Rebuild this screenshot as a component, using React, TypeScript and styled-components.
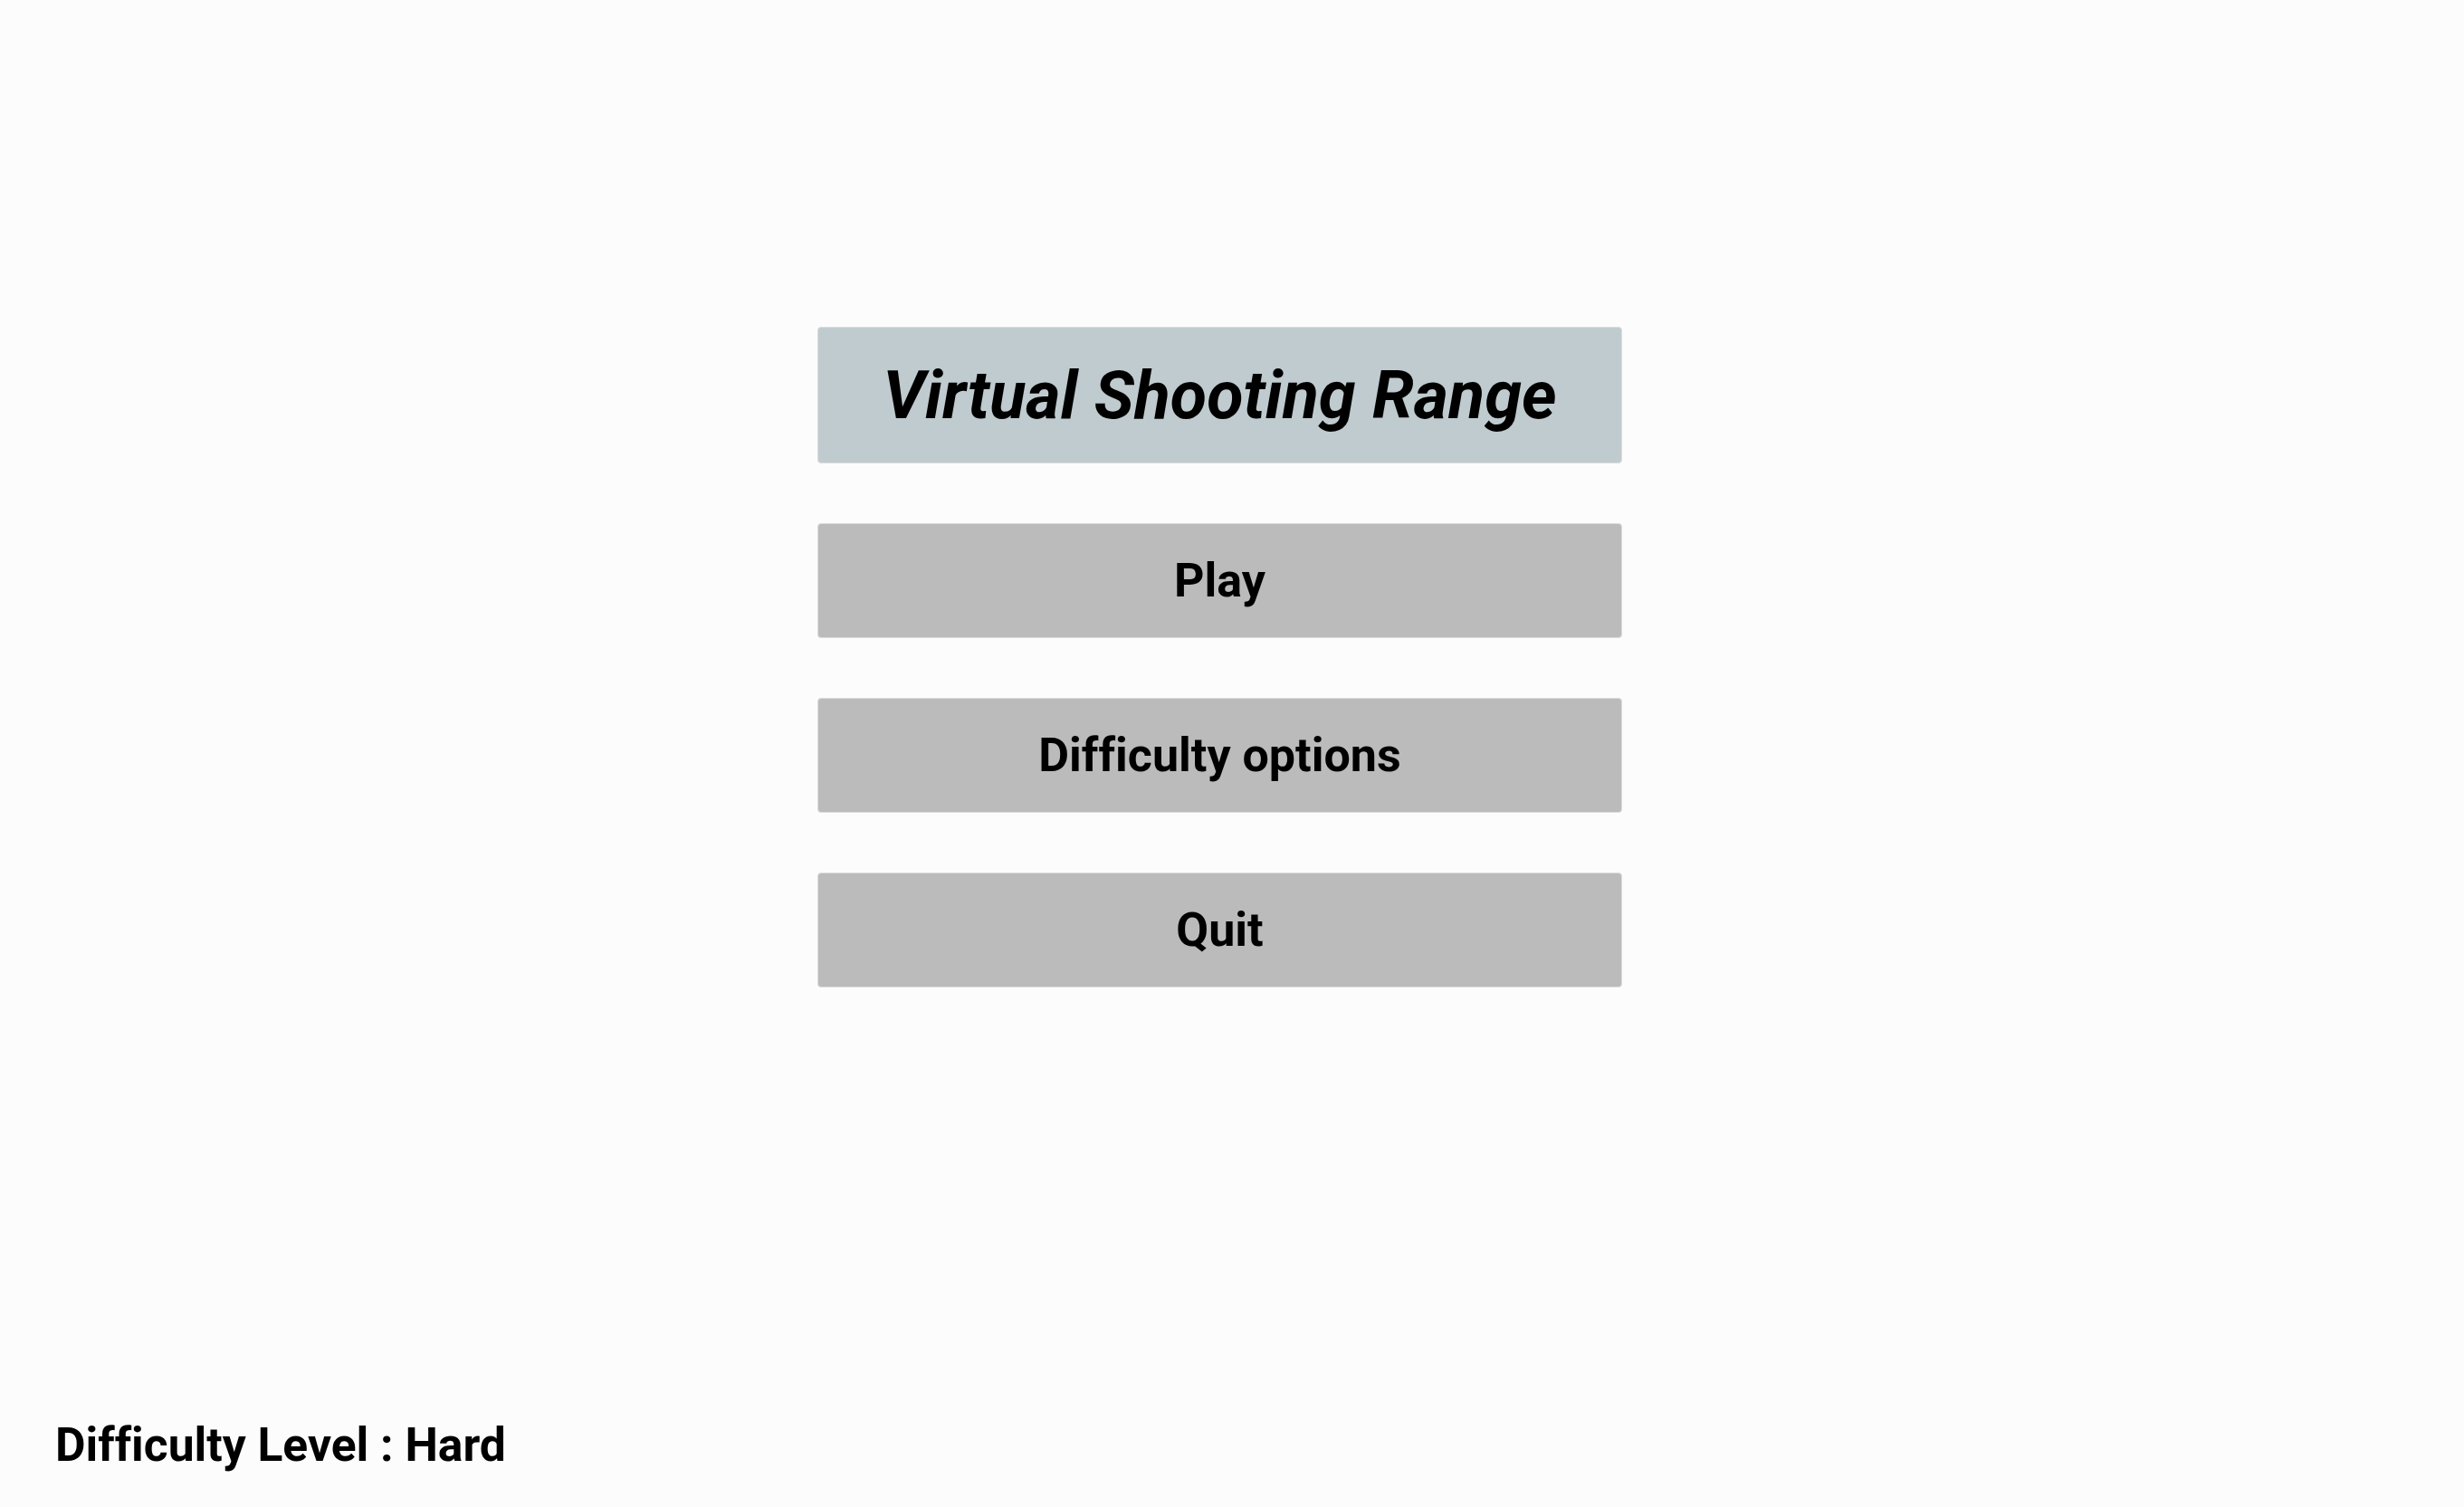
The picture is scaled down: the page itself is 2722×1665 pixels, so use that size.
import React from "react";
import styled, { createGlobalStyle } from "styled-components";

const Global = createGlobalStyle`
  html, body { margin: 0; padding: 0; background: #fcfcfc; }
  body {
    font-family: Roboto, "Liberation Sans", sans-serif;
    color: #000;
    font-variant-ligatures: none;
    font-feature-settings: "liga" 0;
  }
`;

const Page = styled.div`
  width: 100vw;
  height: 100vh;
  display: flex;
  flex-direction: column;
  box-sizing: border-box;
  padding-top: 361px;
  background: #fcfcfc;
`;

const Menu = styled.div`
  display: flex;
  flex-direction: column;
  gap: 66px;
  width: 889px;
  margin-left: 903px;
`;

const Panel = styled.div<{ $title?: boolean }>`
  box-sizing: border-box;
  height: ${(p) => (p.$title ? 151 : 127)}px;
  display: flex;
  align-items: center;
  justify-content: center;
  background: ${(p) => (p.$title ? "#bfcbcf" : "#bbbbbb")};
  border: 1px solid #dcdcdc;
  border-radius: 4px;
  font-weight: 700;
  font-style: ${(p) => (p.$title ? "italic" : "normal")};
  font-size: ${(p) => (p.$title ? 73.8 : 52)}px;
  cursor: ${(p) => (p.$title ? "default" : "pointer")};
`;

const Spacer = styled.div`
  flex: 1;
`;

const Footer = styled.div`
  padding: 0 0 38px 61px;
  font-size: 51.6px;
  font-weight: 700;
  line-height: normal;
`;

export default function App() {
  return (
    <>
      <Global />
      <Page>
        <Menu>
          <Panel $title>Virtual Shooting Range</Panel>
          <Panel>Play</Panel>
          <Panel>Difficulty options</Panel>
          <Panel>Quit</Panel>
        </Menu>
        <Spacer />
        <Footer>Difficulty Level : Hard</Footer>
      </Page>
    </>
  );
}
